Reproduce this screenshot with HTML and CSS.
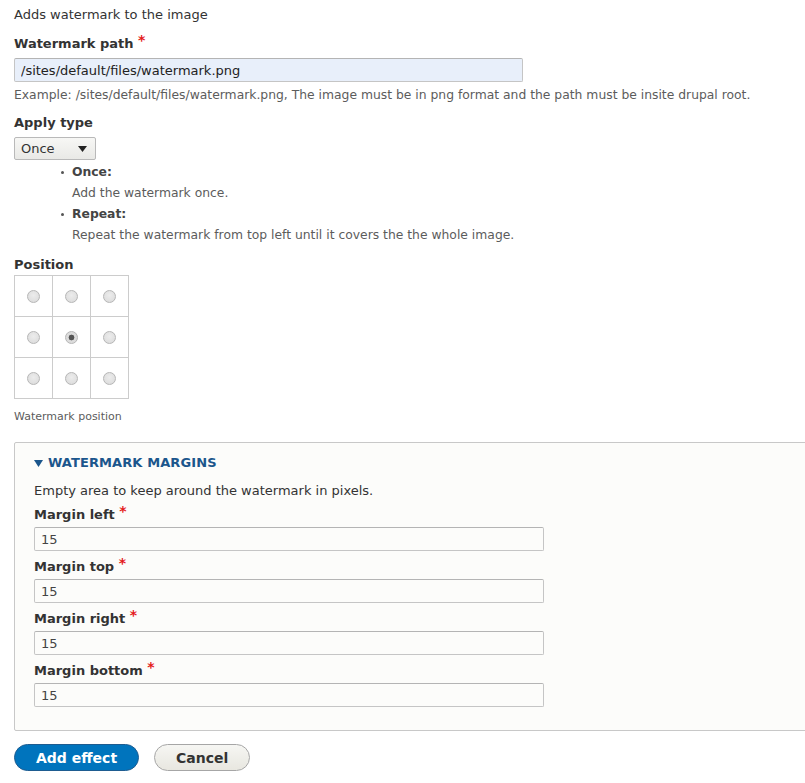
FILE: index.html
```html
<!DOCTYPE html>
<html lang="en">
<head>
<meta charset="utf-8">
<title>Watermark effect</title>
<link rel="stylesheet" href="styles.css">
</head>
<body>
<form class="page">
  <p class="intro">Adds watermark to the image</p>

  <div class="form-item">
    <label class="label" for="wm-path">Watermark path <span class="req">*</span></label>
    <input class="text wide autofilled" id="wm-path" type="text" value="/sites/default/files/watermark.png">
    <div class="description">Example: /sites/default/files/watermark.png, The image must be in png format and the path must be insite drupal root.</div>
  </div>

  <div class="form-item">
    <label class="label" for="wm-type">Apply type</label>
    <div class="select" id="wm-type">
      <span>Once</span>
      <svg class="caret" width="9" height="6" viewBox="0 0 9 6"><path d="M0 0h9L4.5 6z" fill="#222"/></svg>
    </div>
    <ul class="options description">
      <li><strong>Once:</strong><br>Add the watermark once.</li>
      <li><strong>Repeat:</strong><br>Repeat the watermark from top left until it covers the the whole image.</li>
    </ul>
  </div>

  <div class="form-item">
    <div class="label tight">Position</div>
    <div class="grid">
      <div class="cell"><input type="radio" name="pos"></div>
      <div class="cell"><input type="radio" name="pos"></div>
      <div class="cell"><input type="radio" name="pos"></div>
      <div class="cell"><input type="radio" name="pos"></div>
      <div class="cell"><input type="radio" name="pos" checked></div>
      <div class="cell"><input type="radio" name="pos"></div>
      <div class="cell"><input type="radio" name="pos"></div>
      <div class="cell"><input type="radio" name="pos"></div>
      <div class="cell"><input type="radio" name="pos"></div>
    </div>
    <div class="description small">Watermark position</div>
  </div>

  <div class="fieldset">
    <div class="legend">
      <svg class="tri" width="9" height="7" viewBox="0 0 9 7"><path d="M0 0h9L4.5 7z" fill="#1b568c"/></svg>
      <span>WATERMARK MARGINS</span>
    </div>
    <p class="fs-desc">Empty area to keep around the watermark in pixels.</p>
    <div class="fs-item">
      <label class="label" for="m-left">Margin left <span class="req">*</span></label>
      <input class="text wide" id="m-left" type="text" value="15">
    </div>
    <div class="fs-item">
      <label class="label" for="m-top">Margin top <span class="req">*</span></label>
      <input class="text wide" id="m-top" type="text" value="15">
    </div>
    <div class="fs-item">
      <label class="label" for="m-right">Margin right <span class="req">*</span></label>
      <input class="text wide" id="m-right" type="text" value="15">
    </div>
    <div class="fs-item">
      <label class="label" for="m-bottom">Margin bottom <span class="req">*</span></label>
      <input class="text wide" id="m-bottom" type="text" value="15">
    </div>
  </div>

  <div class="actions">
    <button type="button" class="btn primary">Add effect</button>
    <button type="button" class="btn">Cancel</button>
  </div>
</form>
</body>
</html>
```

FILE: styles.css
```css
html, body {
  margin: 0;
  padding: 0;
  background: #fff;
  overflow: hidden;
}

body {
  font-family: "DejaVu Sans", "Liberation Sans", sans-serif;
  font-size: 13px;
  line-height: 20px;
  color: #333;
}

.page {
  width: 830px;
  padding: 5px 0 0 14px;
}

.intro {
  margin: 0 0 9px;
}

.form-item {
  margin: 0 0 9px;
}

.label {
  display: block;
  height: 20px;
  font-weight: bold;
  color: #333;
  margin: 0 0 4px;
}

.label.tight {
  margin-bottom: 0;
}

/* required marker sits a little above the baseline without growing the line */
.req {
  color: #e41a1a;
  font-weight: bold;
  font-size: 14px;
  line-height: 0;
  vertical-align: 3px;
}

.text {
  display: block;
  box-sizing: border-box;
  height: 24px;
  margin: 0;
  padding: 0 6px;
  border: 1px solid #c5c5c5;
  border-top-color: #b4b4b4;
  border-radius: 2px;
  background: #fcfcfa;
  font-family: inherit;
  font-size: 13px;
  color: #333;
  outline: none;
}

.wide {
  width: 509px;
}

.autofilled {
  background: #e8effa;
  color: #222;
}

.description {
  margin-top: 4px;
  font-size: 12.35px;
  line-height: 18px;
  color: #5c5c5c;
}

.description.small {
  margin-top: 9px;
  font-size: 11px;
}

.select {
  box-sizing: border-box;
  width: 82px;
  height: 23px;
  padding: 0 8px 0 6px;
  display: flex;
  align-items: center;
  justify-content: space-between;
  border: 1px solid #b9b9b9;
  border-radius: 2px;
  background: linear-gradient(#f7f7f5, #e9e9e6);
  font-size: 13px;
  color: #333;
}

.options {
  margin: 2px 0 0;
  padding: 0 0 0 58px;
  list-style: none;
  line-height: 21px;
}

.options li {
  position: relative;
}

.options li::before {
  content: "";
  position: absolute;
  left: -11px;
  top: 9px;
  width: 3px;
  height: 3px;
  border-radius: 50%;
  background: #555;
}

.options strong {
  color: #444;
}

.grid {
  display: grid;
  grid-template-columns: repeat(3, 38px);
  grid-auto-rows: 41px;
  width: max-content;
  border-left: 1px solid #ccc;
  border-top: 1px solid #ccc;
}

.cell {
  box-sizing: border-box;
  border-right: 1px solid #ccc;
  border-bottom: 1px solid #ccc;
  display: flex;
  align-items: center;
  justify-content: center;
}

.cell input {
  appearance: none;
  -webkit-appearance: none;
  margin: 0;
  width: 13px;
  height: 13px;
  border-radius: 50%;
  border: 1px solid #b6b6b6;
  background: radial-gradient(circle at 50% 40%, #ececec, #d9d9d9);
  box-sizing: border-box;
}

.cell input:checked {
  background: radial-gradient(circle, #555 0 2.6px, #dcdcdc 3.2px);
}

.fieldset {
  margin: 16px 0 0;
  box-sizing: border-box;
  width: 810px;
  padding: 10px 0 23px 19px;
  border: 1px solid #c8c8c8;
  border-radius: 2px;
  background: #fcfcfa;
}

.legend {
  display: flex;
  align-items: center;
  gap: 5px;
  height: 20px;
  font-weight: bold;
  color: #1b568c;
  letter-spacing: 0.1px;
}

.fs-desc {
  margin: 8px 0 4px;
}

.fs-item + .fs-item {
  margin-top: 6px;
}

.fs-item .label {
  margin-bottom: 2px;
}

.fs-item .text {
  width: 510px;
  color: #444;
}

.actions {
  margin-top: 13px;
  display: flex;
  gap: 15px;
}

.btn {
  box-sizing: border-box;
  height: 27px;
  padding: 0 21px;
  border: 1px solid #a6a6a6;
  border-radius: 20px;
  background: linear-gradient(#f6f6f3, #e8e7e0);
  font-family: inherit;
  font-size: 14px;
  font-weight: bold;
  color: #333;
  cursor: pointer;
}

.btn.primary {
  background: #0074bd;
  border-color: #1e5c90;
  color: #fff;
}
```
